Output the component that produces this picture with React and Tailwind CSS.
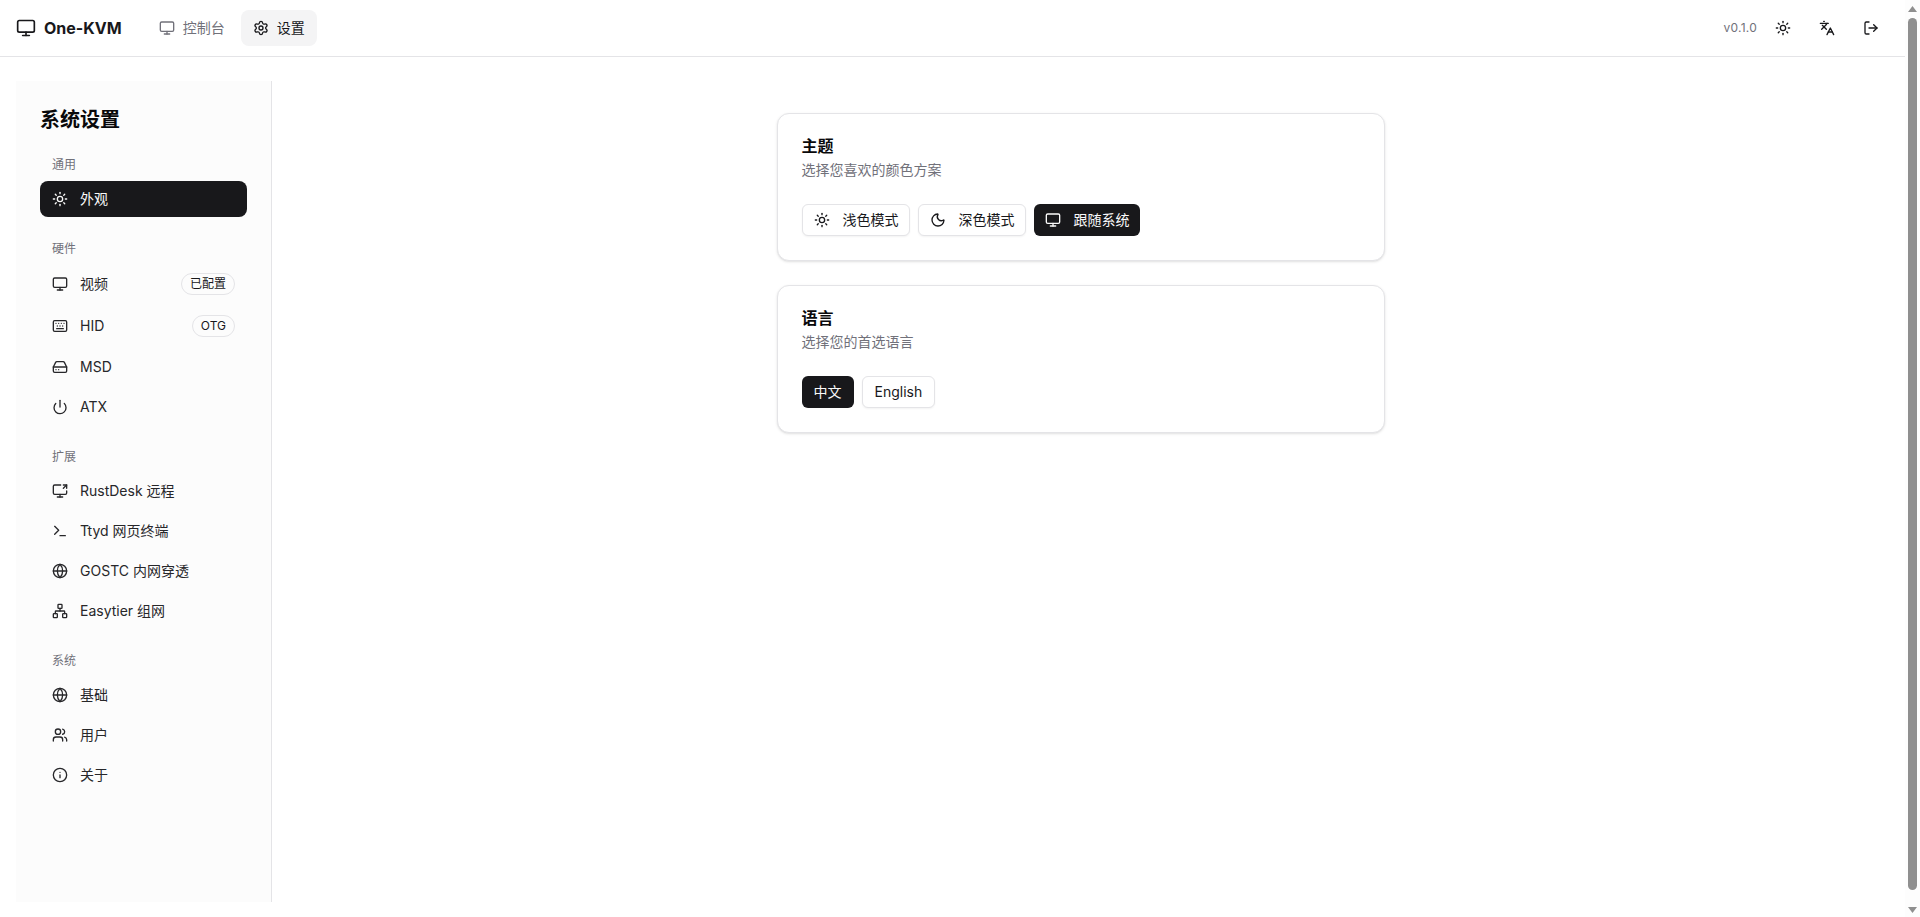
import React from "react";
import {
  Monitor, Settings, Sun, Moon, Keyboard, HardDrive, Power, ScreenShare,
  Terminal, Globe, Network, Users, Info, Languages, LogOut,
} from "lucide-react";

const groups = [
  { label: "通用", items: [{ icon: Sun, text: "外观", active: true }] },
  {
    label: "硬件",
    items: [
      { icon: Monitor, text: "视频", badge: "已配置" },
      { icon: Keyboard, text: "HID", badge: "OTG" },
      { icon: HardDrive, text: "MSD" },
      { icon: Power, text: "ATX" },
    ],
  },
  {
    label: "扩展",
    items: [
      { icon: ScreenShare, text: "RustDesk 远程" },
      { icon: Terminal, text: "Ttyd 网页终端" },
      { icon: Globe, text: "GOSTC 内网穿透" },
      { icon: Network, text: "Easytier 组网" },
    ],
  },
  {
    label: "系统",
    items: [
      { icon: Globe, text: "基础" },
      { icon: Users, text: "用户" },
      { icon: Info, text: "关于" },
    ],
  },
];

const OptionButton = ({ icon: Icon, active, children }) => (
  <button
    className={
      "flex h-8 items-center rounded-md text-sm " +
      (Icon ? "gap-[13px] pr-[10px] pl-[11px] " : "px-3 ") +
      (active
        ? "bg-[#18181b] text-[#fafafa]"
        : "border border-[#e4e4e7] bg-white text-[#18181b] shadow-xs")
    }
  >
    {Icon && <Icon className="h-4 w-4" />}
    {children}
  </button>
);

const Card = ({ title, desc, children }) => (
  <section className="rounded-xl border border-[#e4e4e7] bg-white px-6 pt-5 pb-6 shadow-sm">
    <h3 className="text-base leading-6 font-bold text-[#09090b]">{title}</h3>
    <p className="mt-0.5 text-sm leading-5 text-[#71717a]">{desc}</p>
    <div className="mt-6 flex gap-2">{children}</div>
  </section>
);

const Sidebar = () => (
  <aside className="h-[821px] w-64 shrink-0 border-r border-[#e4e4e7] bg-[#fcfcfc] p-6">
    <h2 className="pt-px text-xl leading-7 font-bold text-[#09090b]">系统设置</h2>
    <div className="mt-[23px] space-y-6">
      {groups.map((group) => (
        <div key={group.label}>
          <div className="mb-2 px-3 text-xs leading-4 text-[#71717a]">{group.label}</div>
          <div className="space-y-1">
            {group.items.map((item) => (
              <div
                key={item.text}
                className={
                  "flex items-center gap-3 rounded-lg px-3 py-2 text-sm leading-5 " +
                  (item.active ? "bg-[#18181b] text-[#fafafa]" : "text-[#27272a]")
                }
              >
                <item.icon className="h-4 w-4 shrink-0" />
                <span className="flex-1">{item.text}</span>
                {item.badge && (
                  <span className="rounded-full border border-[#e4e4e7] px-2 py-0.5 text-xs leading-4 text-[#18181b]">
                    {item.badge}
                  </span>
                )}
              </div>
            ))}
          </div>
        </div>
      ))}
    </div>
  </aside>
);

const Scrollbar = () => (
  <div className="flex h-full w-[15px] shrink-0 flex-col items-center bg-[#fdfdfd]">
    <svg className="mt-[6px] h-[6px] w-[9px]" viewBox="0 0 9 6">
      <polygon points="4.5,0 9,6 0,6" fill="#8f8f8f" />
    </svg>
    <div className="mt-[6px] h-[872px] w-[9px] rounded-full bg-[#8f8f8f]" />
    <svg className="mt-[17px] h-[6px] w-[9px]" viewBox="0 0 9 6">
      <polygon points="0,0 9,0 4.5,6" fill="#8f8f8f" />
    </svg>
  </div>
);

export default function App() {
  return (
    <div
      className="flex h-screen overflow-hidden bg-white text-[#18181b]"
      style={{ fontFamily: '"Inter", "Noto Sans CJK SC", sans-serif' }}
    >
      <div className="min-w-0 flex-1">
        <header className="flex h-[57px] items-center border-b border-[#e4e4e7] px-4">
          <div className="flex items-center gap-2">
            <Monitor className="h-5 w-5" />
            <span className="text-base font-bold">One-KVM</span>
          </div>
          <nav className="ml-[25px] flex items-center gap-1 text-sm">
            <div className="flex h-9 items-center gap-2 rounded-lg px-3 text-[#71717a]">
              <Monitor className="h-4 w-4" />
              控制台
            </div>
            <div className="flex h-9 items-center gap-2 rounded-lg bg-[#f4f4f5] px-3">
              <Settings className="h-4 w-4" />
              设置
            </div>
          </nav>
          <div className="ml-auto flex items-center gap-2">
            <span className="text-xs tracking-[0.02em] text-[#71717a]">v0.1.0</span>
            <button className="flex h-9 w-9 items-center justify-center rounded-md">
              <Sun className="h-4 w-4" />
            </button>
            <button className="flex h-9 w-9 items-center justify-center rounded-md">
              <Languages className="h-4 w-4" />
            </button>
            <button className="flex h-9 w-9 items-center justify-center rounded-md">
              <LogOut className="h-4 w-4" />
            </button>
          </div>
        </header>
        <div className="flex px-4 pt-6">
          <Sidebar />
          <main className="min-w-0 flex-1 pt-8">
            <div className="mx-auto w-[608px] space-y-6">
              <Card title="主题" desc="选择您喜欢的颜色方案">
                <OptionButton icon={Sun}>浅色模式</OptionButton>
                <OptionButton icon={Moon}>深色模式</OptionButton>
                <OptionButton icon={Monitor} active>跟随系统</OptionButton>
              </Card>
              <Card title="语言" desc="选择您的首选语言">
                <OptionButton active>中文</OptionButton>
                <OptionButton>English</OptionButton>
              </Card>
            </div>
          </main>
        </div>
      </div>
      <Scrollbar />
    </div>
  );
}
